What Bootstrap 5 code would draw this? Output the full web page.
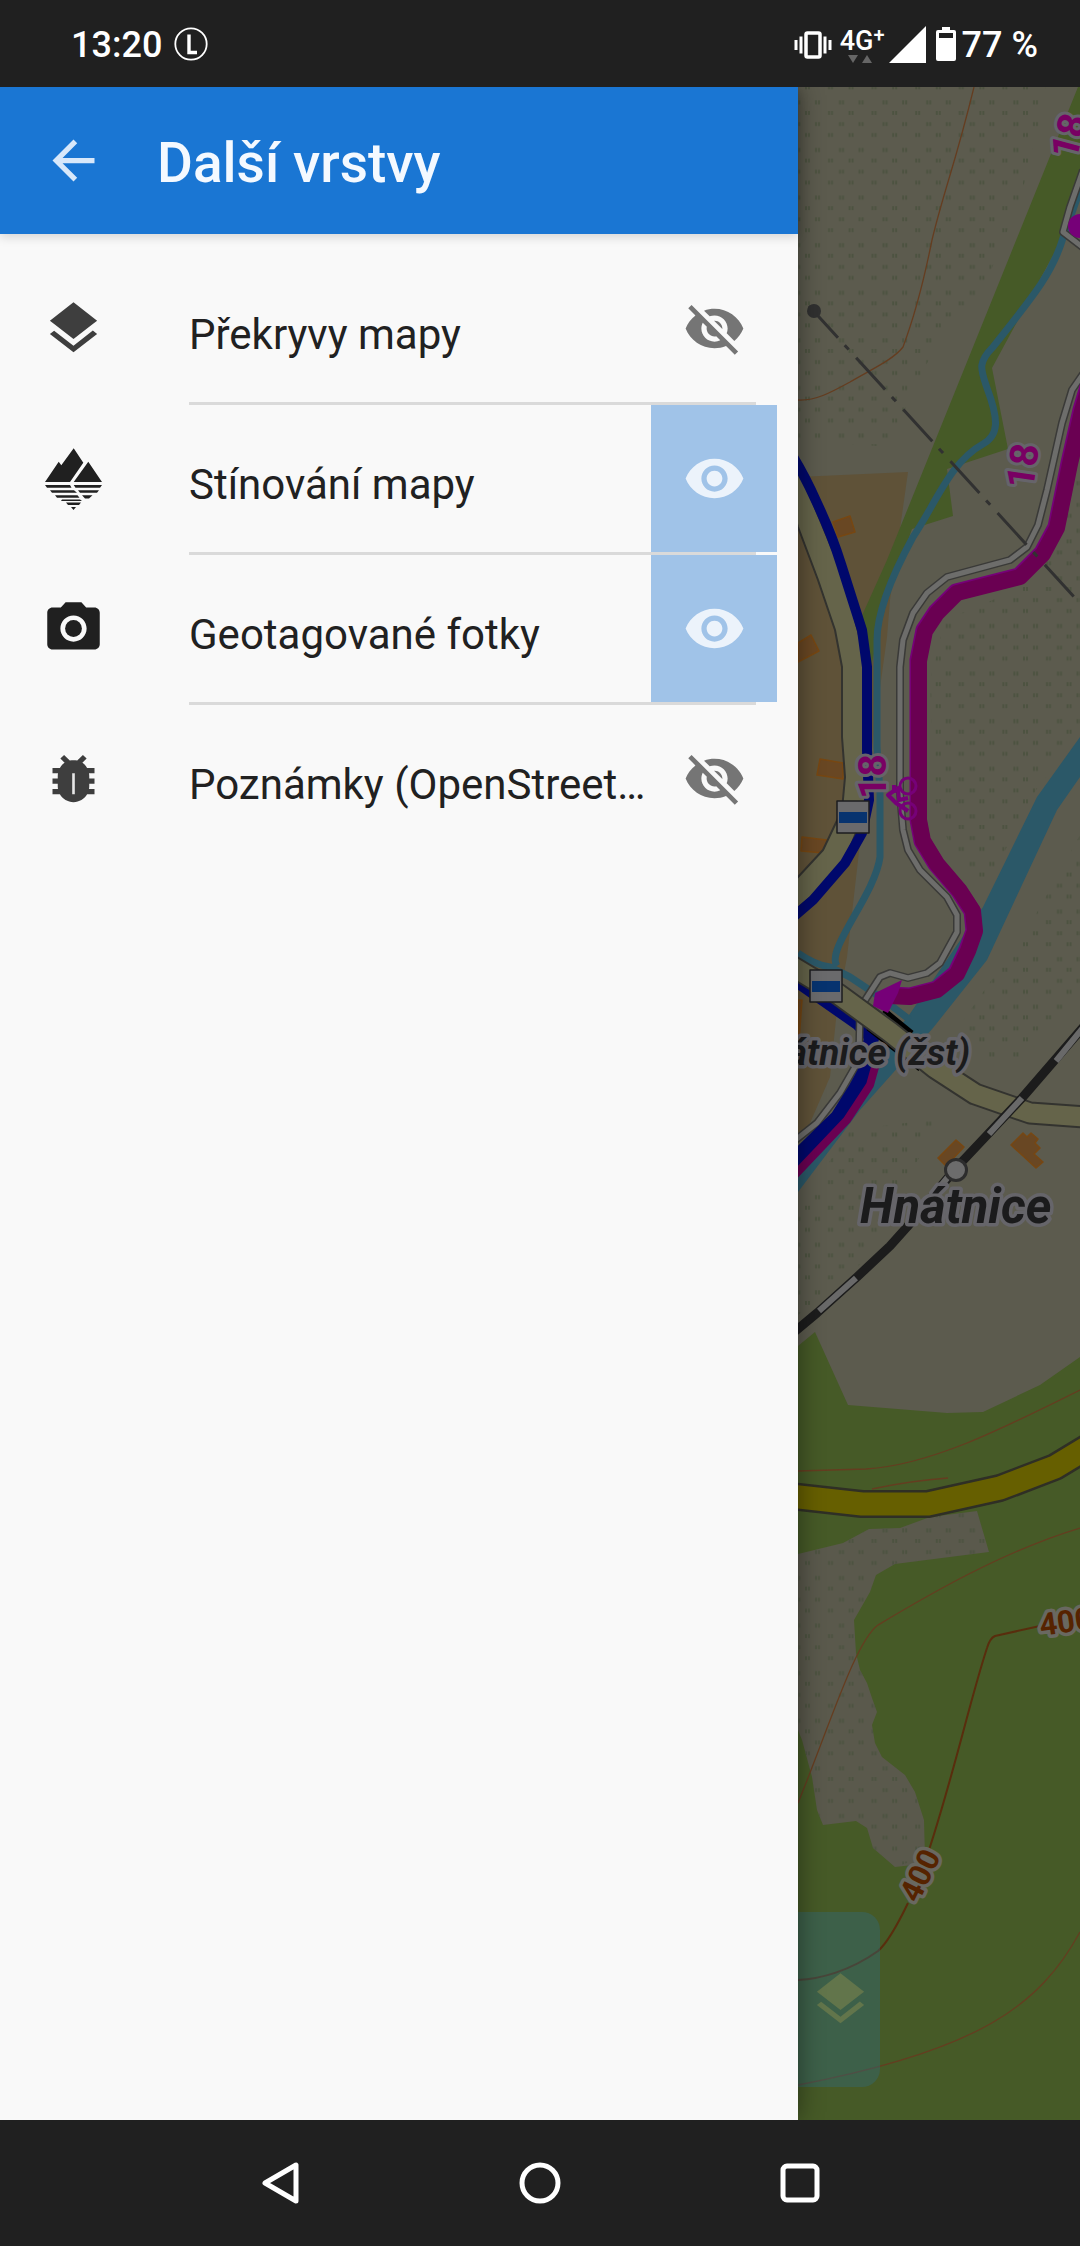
<!DOCTYPE html>
<html lang="cs">
<head>
<meta charset="utf-8">
<meta name="viewport" content="width=device-width, initial-scale=1">
<title>Další vrstvy</title>
<link href="https://cdn.jsdelivr.net/npm/bootstrap@5.3.0/dist/css/bootstrap.min.css" rel="stylesheet">
<style>
body{font-family:Roboto,"Noto Sans",sans-serif;background:#202020;color:#212121}
svg{display:block;flex:none}
.sysbar{background:#202020;color:#fff;height:87px;padding:2px 42px 0 71px;font-size:36px;font-weight:500;line-height:44px;z-index:2}
.net-type{font-size:27px;line-height:28px}
.net-type sup{font-size:20px;top:-8px}
.drawer{flex:0 0 798px;min-width:0;background:#f9f9f9;z-index:1;box-shadow:0 0 24px rgba(0,0,0,.45)}
.drawer-head{background:#1a76d3;height:147px;padding-left:42px;gap:52px;box-shadow:0 3px 10px rgba(0,0,0,.15)}
.drawer-head h1{font-size:55px;font-weight:500;line-height:64px;padding-top:4px;color:#f4f9ff}
.layer-list{padding:21px 21px 0 42px}
.layer-row{height:150px}
.layer-name{font-size:42px;line-height:56px;padding-top:12px;color:#212121;min-width:0}
.layer-icon{margin-right:84px;color:#3e3e3e}
.layer-icon.solid{color:#202020}
.layer-body{min-width:0;border-bottom:3px solid transparent;position:relative}
.layer-row:not(:last-child) .layer-body::after{content:"";position:absolute;left:0;right:21px;bottom:-3px;height:3px;background:#dadada}
.eye-btn{flex:0 0 126px;color:#757575}
.eye-btn.on{background:#a0c3e8;color:#ecf3fb}
.map-pane{background:#5c5b4e;min-width:0}
.fab-layers{left:0;bottom:33px;width:82px;height:175px;padding-left:11px;background:rgba(47,106,125,.4);color:#62754b;border-radius:0 18px 18px 0}
.navkeys{background:#202020;height:126px;padding:0 150px;z-index:2}
.ref18{font:700 39px Roboto,sans-serif;fill:#790063;stroke:#66646a;stroke-width:6px;paint-order:stroke;stroke-linejoin:round}
.elev{font:700 31px Roboto,sans-serif;fill:#562300;stroke:#696860;stroke-width:7px;paint-order:stroke;stroke-linejoin:round}
.place{font-family:Roboto,sans-serif;font-weight:700;font-style:italic;fill:#1b1b1c;stroke:#66656a;stroke-width:7px;paint-order:stroke;stroke-linejoin:round}
</style>
<script src="https://cdn.jsdelivr.net/npm/bootstrap@5.3.0/dist/js/bootstrap.bundle.min.js" defer></script>
</head>
<body class="d-flex flex-column min-vh-100">

<svg width="0" height="0" class="position-absolute" aria-hidden="true">
  <symbol id="i-layers" viewBox="0 0 24 24"><path fill="currentColor" d="M11.99 18.54l-7.37-5.73L3 14.07l9 7 9-7-1.63-1.27-7.38 5.74zM12 16l7.36-5.73L21 9l-9-7-9 7 1.63 1.27L12 16z"/></symbol>
  <symbol id="i-eye" viewBox="0 0 24 24"><path fill="currentColor" d="M12 4.5C7 4.5 2.73 7.61 1 12c1.73 4.39 6 7.5 11 7.5s9.27-3.11 11-7.5c-1.73-4.39-6-7.5-11-7.5zM12 17c-2.76 0-5-2.24-5-5s2.24-5 5-5 5 2.24 5 5-2.24 5-5 5zm0-8c-1.66 0-3 1.34-3 3s1.34 3 3 3 3-1.34 3-3-1.34-3-3-3z"/></symbol>
  <symbol id="i-eye-off" viewBox="0 0 24 24"><path fill="currentColor" d="M12 7c2.76 0 5 2.24 5 5 0 .65-.13 1.26-.36 1.83l2.92 2.92c1.51-1.26 2.7-2.89 3.43-4.75-1.73-4.39-6-7.5-11-7.5-1.4 0-2.74.25-3.98.7l2.16 2.16C10.74 7.13 11.35 7 12 7zM2 4.27l2.28 2.28.46.46C3.08 8.3 1.78 10.02 1 12c1.73 4.39 6 7.5 11 7.5 1.55 0 3.03-.3 4.38-.84l.42.42L19.73 22 21 20.73 3.27 3 2 4.27zM7.53 9.8l1.55 1.55c-.05.21-.08.43-.08.65 0 1.66 1.34 3 3 3 .22 0 .44-.03.65-.08l1.55 1.55c-.67.33-1.41.53-2.2.53-2.76 0-5-2.24-5-5 0-.79.2-1.53.53-2.2zm4.31-.78l3.15 3.15.02-.16c0-1.66-1.34-3-3-3l-.17.01z"/></symbol>
</svg>

<header class="sysbar position-relative d-flex align-items-center justify-content-between">
  <div class="d-flex align-items-center">
    <span>13:20</span>
    <svg class="ms-2" width="40" height="40" viewBox="0 0 40 40" fill="none" stroke="#fff"><circle cx="21" cy="19" r="15.7" stroke-width="1.8"/><path d="M19 9.500V27.500H27" stroke-width="3.400"/></svg>
  </div>
  <div class="d-flex align-items-center">
    <svg width="38" height="28" viewBox="0 0 38 28" fill="none" stroke="#fff"><rect x="12" y="2" width="14" height="24" rx="1.500" stroke-width="3.500"/><path d="M7 5.500V22.500M31 5.500V22.500M2 9V19M36 9V19" stroke-width="3"/></svg>
    <div class="ms-2 d-flex flex-column align-items-start">
      <span class="net-type">4G<sup>+</sup></span>
      <svg width="42" height="8" viewBox="0 0 42 8" fill="#666"><path d="M8 0h10l-5 8zM22 8h10l-5-8z"/></svg>
    </div>
    <svg class="ms-1" width="37" height="38" viewBox="0 0 37 38"><path fill="#fff" d="M0 37L37 0V37z"/></svg>
    <svg class="ms-2 me-1" width="24" height="36" viewBox="0 0 24 36"><path fill="#fff" d="M8 0h8v3h4q2 0 2 2v27q0 2-2 2H4q-2 0-2-2V5q0-2 2-2h4z"/><path fill="#202020" d="M5 6h14v5H5z"/></svg>
    <span>77 %</span>
  </div>
</header>

<main class="d-flex flex-grow-1">
  <section class="drawer">
    <div class="drawer-head d-flex align-items-center">
      <button class="btn p-0 border-0" type="button" aria-label="Zpět">
        <svg width="63" height="63" viewBox="0 0 24 24"><path fill="#d8e8fa" d="M20 11H7.830l5.590-5.590L12 4l-8 8 8 8 1.410-1.410L7.830 13H20v-2z"/></svg>
      </button>
      <h1 class="m-0">Další vrstvy</h1>
    </div>
    <ul class="layer-list list-unstyled m-0">
      <li class="layer-row d-flex">
        <svg class="layer-icon mt-auto mb-auto" width="63" height="66" viewBox="0 0 63 66"><use href="#i-layers" width="63" height="63"/></svg>
        <div class="layer-body d-flex flex-grow-1">
          <span class="layer-name text-truncate flex-grow-1 align-self-center">Překryvy mapy</span>
          <button class="eye-btn btn border-0 rounded-0 p-0 d-flex align-items-center justify-content-center" type="button" aria-label="Zobrazit překryvy mapy"><svg width="63" height="63"><use href="#i-eye-off"/></svg></button>
        </div>
      </li>
      <li class="layer-row d-flex">
        <svg class="layer-icon solid mt-auto mb-auto" width="63" height="66" viewBox="0 0 63 66" fill="currentColor"><path d="M3 35L16.700 14.700L19.300 18.300L31.700 1.300L41.300 15.700L28 35zM31.700 35L46.300 14.700L60 35zM3 38H28L29.500 40.700H5zM31.700 38H60L58 40.700H33.500zM8 43.300H32L35 45.700H10zM36 43.300H57L55 45.700H38zM13 48.300H35.500L37.500 50.700H15zM40 48.300H50.500L47 51.500H43zM20 52.500H38L40 54H19zM24 55.500H39L37 58H26zM29 60H34L31.500 63z"/></svg>
        <div class="layer-body d-flex flex-grow-1">
          <span class="layer-name text-truncate flex-grow-1 align-self-center">Stínování mapy</span>
          <button class="eye-btn on btn border-0 rounded-0 p-0 d-flex align-items-center justify-content-center" type="button" aria-label="Skrýt stínování mapy"><svg width="63" height="63"><use href="#i-eye"/></svg></button>
        </div>
      </li>
      <li class="layer-row d-flex">
        <svg class="layer-icon solid mt-auto mb-auto" width="63" height="66" viewBox="0 0 63 66"><g transform="scale(2.625)" fill="currentColor"><circle cx="12" cy="12" r="3.200"/><path d="M9 2L7.170 4H4c-1.100 0-2 .9-2 2v12c0 1.100.9 2 2 2h16c1.100 0 2-.9 2-2V6c0-1.100-.9-2-2-2h-3.170L15 2H9zm3 15c-2.760 0-5-2.240-5-5s2.240-5 5-5 5 2.240 5 5-2.240 5-5 5z"/></g></svg>
        <div class="layer-body d-flex flex-grow-1">
          <span class="layer-name text-truncate flex-grow-1 align-self-center">Geotagované fotky</span>
          <button class="eye-btn on btn border-0 rounded-0 p-0 d-flex align-items-center justify-content-center" type="button" aria-label="Skrýt geotagované fotky"><svg width="63" height="63"><use href="#i-eye"/></svg></button>
        </div>
      </li>
      <li class="layer-row d-flex">
        <svg class="layer-icon mt-auto mb-auto" width="63" height="66" viewBox="0 0 63 66"><g transform="scale(2.625)"><path fill="currentColor" d="M20 8h-2.810c-.45-.78-1.070-1.450-1.820-1.960L17 4.410 15.590 3l-2.170 2.170C12.960 5.060 12.490 5 12 5c-.49 0-.96.060-1.410.17L8.410 3 7 4.410l1.620 1.630C7.880 6.550 7.260 7.220 6.810 8H4v2h2.090c-.05.33-.09.66-.09 1v1H4v2h2v1c0 .34.040.67.090 1H4v2h2.810c1.040 1.790 2.970 3 5.190 3s4.150-1.210 5.190-3H20v-2h-2.090c.05-.33.090-.66.090-1v-1h2v-2h-2v-1c0-.34-.04-.67-.09-1H20V8z"/><path stroke="#e6e6e6" stroke-width="1" d="M12 10v8"/></g></svg>
        <div class="layer-body d-flex flex-grow-1">
          <span class="layer-name text-truncate flex-grow-1 align-self-center">Poznámky (OpenStreetMap)</span>
          <button class="eye-btn btn border-0 rounded-0 p-0 d-flex align-items-center justify-content-center" type="button" aria-label="Zobrazit poznámky"><svg width="63" height="63"><use href="#i-eye-off"/></svg></button>
        </div>
      </li>
    </ul>
  </section>

  <section class="map-pane flex-grow-1 position-relative overflow-hidden" aria-label="Mapa">
    <svg class="w-100" viewBox="798 87 282 2033" fill="none" stroke-linejoin="round">
      <defs>
        <pattern id="grass" x="804" y="107" width="43.600" height="47.600" patternUnits="userSpaceOnUse">
          <path stroke="#4d5341" stroke-width="2" d="M2 4v4M5 4v4M25 4v4M28 4v4M12 15v4M15 15v4M36 15v4M39 15v4M2 26v4M5 26v4M25 26v4M28 26v4M12 41v4M15 41v4M36 41v4M39 41v4"/>
        </pattern>
      </defs>
      <!-- meadows -->
      <g fill="url(#grass)">
        <path d="M798 87H1046L1040 120 1020 200 985 285 940 340 915 385 890 447 798 440z"/>
        <path d="M1080 440V735L1036 790 985 890 960 868 935 810 930 680 945 620 1040 580z"/>
        <path d="M1080 835L1030 925 960 1025 985 1062 1025 1058 1080 995z"/>
        <path d="M945 1118L905 1180 863 1262 798 1315V1210L850 1130z"/>
      </g>
      <!-- residential area -->
      <path fill="#5f5238" d="M798 477L908 472 890 600 887 637 877 710 860 843 847 957 837 1010 830 1077 807 1130 798 1140z"/>
      <!-- woods -->
      <path fill="#465a27" d="M1078 87H1080V195L1063 237 992 368 1008 449 947 469 953 516 912 529 887 600 870 670 860 620 887 560z"/>
      <path fill="#465a27" d="M798 1346L815 1332 848 1405 947 1413 983 1412 1040 1385 1080 1357V2120H798z"/>
      <path fill="#5a594c" d="M798 1554L843 1543 869 1529 900 1528 930 1517 977 1511 989 1552 895 1564 876 1575 870 1592 854 1620 856 1653 860 1670 867 1683 872 1698 877 1712 872 1725 875 1743 882 1757 905 1775 915 1792 924 1820 925 1857 913 1865 895 1867 873 1848 867 1828 856 1821 823 1825 817 1810 812 1777 802 1740 798 1730z"/>
      <path fill="url(#grass)" d="M798 1554L843 1543 869 1529 900 1528 930 1517 977 1511 989 1552 895 1564 876 1575 870 1592 854 1620 856 1653 860 1670 867 1683 872 1698 877 1712 872 1725 875 1743 882 1757 905 1775 915 1792 924 1820 925 1857 895 1867 873 1848 867 1828 856 1821 823 1825 817 1810 812 1777 802 1740 798 1730z"/>
      <!-- contour lines -->
      <g stroke="#653d20" stroke-width="1.300">
        <path d="M974 87C955 165 944 190 932 240C925 275 915 315 903 347C893 360 870 370 850 382C830 393 815 401 798 400"/>
        <path d="M798 1471L866 1469C930 1465 1000 1430 1080 1390M872 1489C900 1483 920 1480 948 1478"/>
        <path d="M1080 1528C1000 1552 920 1600 878 1625C855 1642 830 1725 798 1803M1080 1932C1040 2005 980 2050 798 2085"/>
      </g>
      <path stroke="#592d0d" stroke-width="2" d="M1040 1626L995 1636Q990 1638 987 1648C970 1700 955 1770 929 1850M908 1903C895 1930 885 1945 878 1951C850 1971 820 1979 798 1980"/>
      <!-- water -->
      <path fill="#2b5868" d="M1080 737L1037 797 983 907 907 1018 870 1060 850 1100 798 1150V1192L860 1110 933 1028 987 960 1057 810 1080 777z"/>
      <path stroke="#2b5868" stroke-width="7" d="M1080 190L1063 238C1052 275 1030 300 993 347C977 363 981 370 987 388C999 420 999 435 983 444C950 462 935 505 913 537C895 570 877 610 877 640V747L880 793V857C875 895 825 950 837 966M798 953Q815 965 830 967L850 977 880 997 910 1020"/>
      <!-- buildings -->
      <g fill="#694723" stroke="#774712" stroke-width="1.500">
        <path d="M833 522L850 516 855 532 838 537zM798 643L811 635 819 651 798 662zM820 759L843 763V779L817 775zM802 837L827 840 824 853 801 851zM938 1158L956 1140 964 1147 946 1166zM1011 1145L1023 1133 1027 1137 1031 1133 1038 1139 1035 1143 1040 1148 1034 1154 1043 1162 1036 1168zM798 1000L802 1000 799 1040z"/>
      </g>
      <!-- minor roads -->
      <path fill="#65644a" stroke="#33332f" stroke-width="2" d="M790 500L798 527 818 580 835 630 842 667V737L845 777 842 810 823 850 798 877 790 885V915L813 895 845 860 869 800 867 667 845 580 798 467z"/>
      <path stroke="#00086c" stroke-width="10" d="M790 452Q803 472 817 503 832 535 841 564L862 630 867 667V750L869 800 862 833 845 863 813 900 792 918M790 978L857 1025 872 1040"/>
      <!-- tracks -->
      <path stroke="#3a3a38" stroke-width="8" d="M1083 170L1070 207 1063 232 1085 249M1083 374L1072 390 1062 423 1047 490 1038 525 1027 547 1010 560 947 577 927 593 913 613 903 640 900 667V793L903 830 908 850 920 870 947 897 957 915V932L940 963 927 973 908 978 890 973 880 977 860 1008 859 1060 840 1093 817 1123 793 1142"/>
      <path stroke="#6d6d6b" stroke-width="5" d="M1083 170L1070 207 1063 232 1085 249M1083 374L1072 390 1062 423 1047 490 1038 525 1027 547 1010 560 947 577 927 593 913 613 903 640 900 667V793L903 830 908 850 920 870 947 897 957 915V932L940 963 927 973 908 978 890 973 880 977 860 1008 859 1060 840 1093 817 1123 793 1142"/>
      <path stroke="#00086c" stroke-width="15" d="M872 1035L866 1070 855 1090 838 1117 792 1162"/>
      <path stroke="#6a0052" stroke-width="8" d="M877 1060L870 1085 847 1120 792 1178"/>
      <!-- cycle route -->
      <path stroke="#760078" stroke-width="17" d="M1093 370L1081 410 1069 463 1056 527 1042 553 1019 576 956 592 936 612 924 630 918 660V820L922 841 936 864 959 891 972 911 974 931 967 950 956 973 937 989 910 996 890 995"/>
      <path stroke="#6a0052" stroke-width="16" d="M1094 371L1082 411 1070 464 1057 528 1043 554 1020 577 957 593 937 613 925 631 919 661V820L923 841 937 864 960 891 973 911 975 931 968 951 957 974 937 990 910 997 890 996"/>
      <circle cx="1080" cy="226" r="12" fill="#760078"/>
      <path stroke="#000" stroke-width="5" d="M884 1010L912 1033M868 1028L920 1069"/>
      <path stroke="#33332f" stroke-width="23" d="M790 965L838 994 890 1032 935 1068 975 1094 1030 1113 1085 1117"/>
      <path stroke="#65644a" stroke-width="19" d="M790 965L838 994 890 1032 935 1068 975 1094 1030 1113 1085 1117"/>
      <path fill="#760078" d="M875 993L902 980 898 993 888 1013 873 1006z"/>
      <!-- bicycle -->
      <g stroke="#760078" stroke-width="3"><circle cx="908" cy="786" r="8"/><circle cx="908" cy="811" r="8"/><path d="M908 811L896 803 888 795 898 788 899 800 908 798M894 785v8" stroke-width="4"/></g>
      <!-- main road -->
      <path stroke="#2f2f25" stroke-width="28" d="M790 1496L862 1504H928L1000 1488 1055 1467 1088 1447"/>
      <path stroke="#665f00" stroke-width="23" d="M790 1496L862 1504H928L1000 1488 1055 1467 1088 1447"/>
      <!-- railway -->
      <path stroke="#1c1c1c" stroke-width="9" d="M1086 1024L1022 1098 957 1167 907 1227 890 1246 857 1277 817 1313 792 1334"/>
      <path stroke="#696969" stroke-width="6" d="M1086 1024L1056 1061M1022 1098L989 1134M953 1171L920 1211M856 1278L819 1311"/>
      <circle cx="956" cy="1170" r="10.500" fill="#6c6c6c" stroke="#2d2d2d" stroke-width="3"/>
      <!-- power line -->
      <path stroke="#313131" stroke-width="3" stroke-dasharray="43 10 6 11" d="M809 306L1076 599"/>
      <circle cx="814" cy="311" r="7" fill="#303030"/>
      <!-- trail marks -->
      <g fill="#6a6a6c" stroke="#1d1d1f" stroke-width="1.500"><path d="M837 801h32v32h-32zM810 970h32v32h-32z"/></g>
      <path fill="#07336f" d="M839 812h28v11h-28zM812 981h28v11h-28z"/>
      <!-- labels -->
      <text class="ref18" transform="translate(1076 161) rotate(-75)">18</text>
      <text class="ref18" transform="translate(1033 490) rotate(-82)">18</text>
      <text class="ref18" transform="translate(886 799) rotate(-90)">18</text>
      <text class="place" x="970" y="1065" font-size="37" text-anchor="end">átnice (žst)</text>
      <text class="place" x="860" y="1223" font-size="49">Hnátnice</text>
      <text class="elev" transform="translate(1041 1636) rotate(-8)">400</text>
      <text class="elev" transform="translate(918 1904) rotate(-64)">400</text>
    </svg>
    <button class="fab-layers btn border-0 position-absolute d-flex align-items-center py-0 pe-0" type="button" aria-label="Vrstvy"><svg width="63" height="63"><use href="#i-layers"/></svg></button>
  </section>
</main>

<footer class="navkeys position-relative d-flex align-items-center">
  <button class="btn p-0 border-0 flex-fill" type="button" aria-label="Zpět"><svg class="mx-auto" width="48" height="48" viewBox="0 0 48 48" fill="none" stroke="#fff" stroke-width="5" stroke-linejoin="round"><path d="M40 6V42L9 24z"/></svg></button>
  <button class="btn p-0 border-0 flex-fill" type="button" aria-label="Domů"><svg class="mx-auto" width="48" height="48" viewBox="0 0 48 48" fill="none" stroke="#fff" stroke-width="5"><circle cx="24" cy="24" r="18"/></svg></button>
  <button class="btn p-0 border-0 flex-fill" type="button" aria-label="Přehled"><svg class="mx-auto" width="48" height="48" viewBox="0 0 48 48" fill="none" stroke="#fff" stroke-width="5"><rect x="7" y="7" width="34" height="34" rx="4"/></svg></button>
</footer>
</body>
</html>
